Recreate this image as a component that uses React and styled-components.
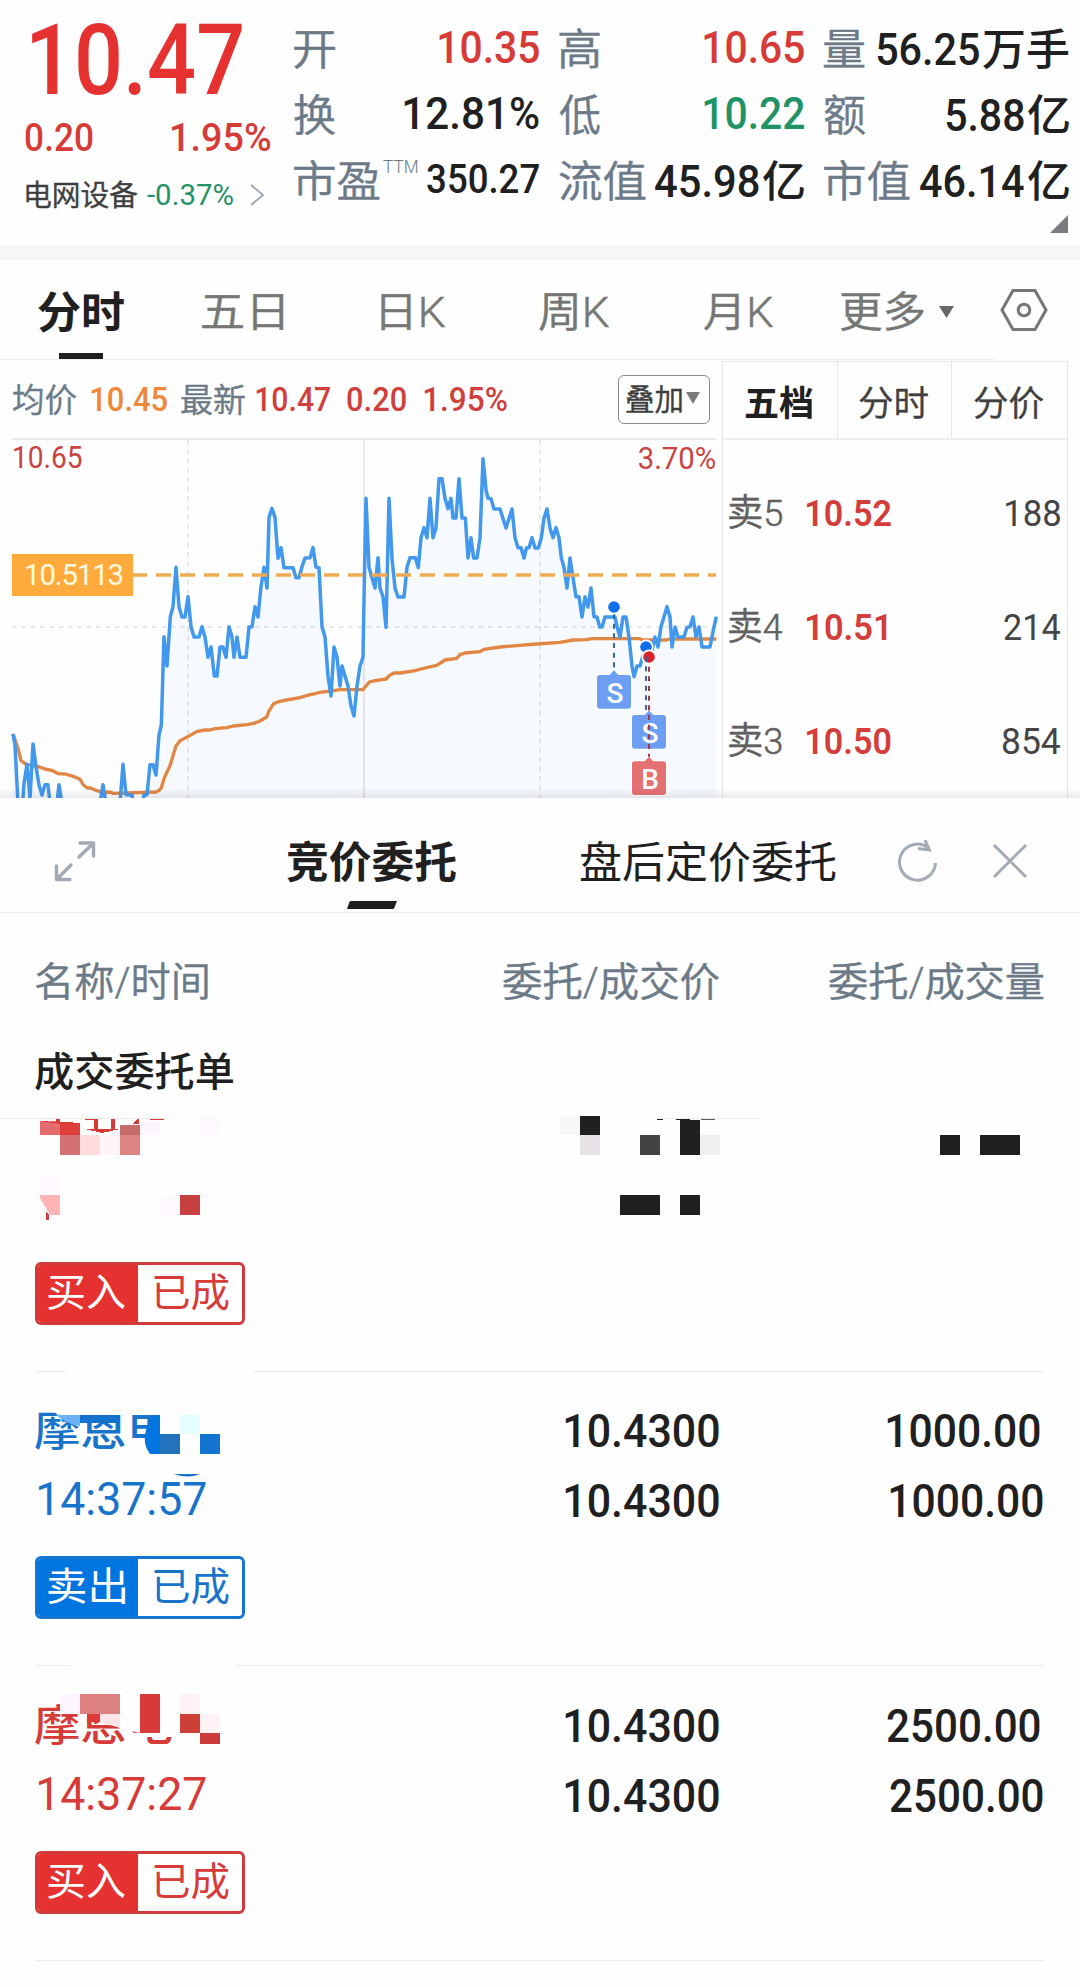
import React, { useLayoutEffect, useRef, useState } from "react";
import styled, { createGlobalStyle } from "styled-components";

const RED = "#e53231";
const RED_TEXT = "#d63b38";
const BLUE = "#0075e0";
const BLUE_TEXT = "#1874cb";
const GREEN = "#1f9366";
const INK = "#202020";
const SLATE = "#6c7a88";
const GREY = "#757775";
const THIN = 350;

const GlobalStyle = createGlobalStyle`
  * { box-sizing: border-box; }
  body {
    margin: 0;
    background: #fefefe;
    font-family: Roboto, "Noto Sans CJK SC", sans-serif;
  }
`;

/* Text condensed or widened so that its ink fills a given width. */
const FitBox = styled.div`
  flex: none;
  width: ${(p) => p.$w}px;
  height: ${(p) => p.$size}px;
  margin-left: ${(p) => p.$ml || 0}px;
`;
const FitText = styled.span`
  display: inline-block;
  white-space: nowrap;
  transform-origin: 0 0;
  vertical-align: top;
  font-size: ${(p) => p.$size}px;
  line-height: ${(p) => p.$size}px;
  font-weight: ${(p) => p.$weight};
  color: ${(p) => p.$color};
  -webkit-text-stroke: ${(p) => (p.$weight === THIN ? 0.5 : 0)}px ${(p) => p.$color};
`;

function Fit({ children, w, size, weight = 400, color = INK, dy = 0, ml }) {
  const ref = useRef(null);
  const [fit, setFit] = useState({ s: 1, x: 0 });
  useLayoutEffect(() => {
    const ctx = document.createElement("canvas").getContext("2d");
    ctx.font = `${weight} ${size}px Roboto, "Noto Sans CJK SC", sans-serif`;
    const m = ctx.measureText(children);
    const ink = m.actualBoundingBoxLeft + m.actualBoundingBoxRight;
    const s = w / ink;
    setFit({ s, x: m.actualBoundingBoxLeft * s });
  }, [children, w, size, weight]);
  return (
    <FitBox $w={w} $size={size} $ml={ml}>
      <FitText
        ref={ref}
        $size={size}
        $weight={weight}
        $color={color}
        style={{ transform: `translate(${fit.x}px, ${dy}px) scaleX(${fit.s})` }}
      >
        {children}
      </FitText>
    </FitBox>
  );
}

const Page = styled.div`
  width: 1080px;
  height: 1987px;
  overflow: hidden;
  background: #fefefe;
`;

/* ---------- quote header ---------- */
const Header = styled.header`
  display: flex;
  position: relative;
  height: 245px;
`;
const PriceBlock = styled.div`
  width: 294px;
  padding-left: 25px;
`;
const PriceLine = styled.div`
  display: flex;
  align-items: center;
  height: ${(p) => p.$h}px;
`;
const Stats = styled.div`
  display: grid;
  grid-template-columns: 245px 245px 245px;
  grid-auto-rows: 66px;
  column-gap: 20px;
  padding-top: 14px;
`;
const Cell = styled.div`
  display: flex;
  align-items: center;
  justify-content: space-between;
`;
const Group = styled.div`
  display: flex;
  align-items: center;
`;
const Band = styled.div`
  height: 15px;
  background: #f6f6f6;
`;
const Corner = styled.svg`
  position: absolute;
  right: 12px;
  bottom: 12px;
`;

const stats = [
  { label: "开", lw: 41, num: "10.35", w: 100, color: RED_TEXT },
  { label: "高", lw: 41, num: "10.65", w: 100, color: RED_TEXT },
  { label: "量", lw: 41, num: "56.25", w: 102, unit: "万手", uw: 86 },
  { label: "换", lw: 41, num: "12.81%", w: 135 },
  { label: "低", lw: 41, num: "10.22", w: 100, color: GREEN },
  { label: "额", lw: 41, num: "5.88", w: 78, unit: "亿", uw: 41 },
  { label: "市盈", lw: 86, sup: "TTM", num: "350.27", w: 112, size: 41 },
  { label: "流值", lw: 87, num: "45.98", w: 104, unit: "亿", uw: 41 },
  { label: "市值", lw: 86, num: "46.14", w: 104, unit: "亿", uw: 41 },
];

function Stat({ s }) {
  return (
    <Cell>
      <Group>
        <Fit w={s.lw} size={43} weight={THIN} color={SLATE} dy={3}>{s.label}</Fit>
        {s.sup && <Fit w={34} size={18} weight={300} color={SLATE} dy={-12} ml={3}>{s.sup}</Fit>}
      </Group>
      <Group>
        <Fit w={s.w} size={s.size || 45} weight={500} color={s.color} dy={s.unit ? 2 : 0}>{s.num}</Fit>
        {s.unit && <Fit w={s.uw} size={43} weight={500} ml={4} dy={3}>{s.unit}</Fit>}
      </Group>
    </Cell>
  );
}

/* ---------- period tabs ---------- */
const Tabs = styled.nav`
  display: flex;
  height: 99px;
  padding-left: 38px;
`;
const Tab = styled.div`
  display: flex;
  flex-direction: column;
  align-items: center;
  justify-content: space-between;
  height: 99px;
  padding-top: 29px;
  margin-right: ${(p) => p.$gap}px;
`;
const TabMark = styled.div`
  width: 44px;
  height: 6px;
  background: ${INK};
`;
const TabIcon = styled.div`
  height: 99px;
  padding-top: ${(p) => p.$top}px;
  margin-right: ${(p) => p.$gap}px;
`;
const TabLine = styled.div`
  width: 996px;
  height: 1px;
  background: #f0f0f0;
`;

/* ---------- chart and order book ---------- */
const Market = styled.section`
  display: flex;
  position: relative;
  height: 438px;
`;
const ChartSide = styled.div`
  width: 722px;
`;
const InfoBar = styled.div`
  display: flex;
  align-items: center;
  height: 70px;
  padding: 8px 0 0 13px;
`;
const Overlay = styled.div`
  display: flex;
  align-items: center;
  gap: 4px;
  width: 92px;
  height: 49px;
  margin-left: 111px;
  padding-left: 7px;
  border: 1.5px solid #8b8b8b;
  border-radius: 6px;
`;
const ChartSvg = styled.svg`
  display: block;
`;
const Book = styled.div`
  width: 346px;
  height: 437px;
  margin-top: 1px;
  border: 1px solid #e6e6e4;
  border-bottom: 0;
`;
const BookTabs = styled.div`
  display: grid;
  grid-template-columns: repeat(3, 1fr);
  height: 78px;
  border-bottom: 2px solid #efefed;
`;
const BookTab = styled.div`
  display: flex;
  align-items: center;
  justify-content: center;
  border-right: ${(p) => (p.$last ? 0 : 1)}px solid #e8e8e6;
  padding: 4px 2px 0 0;
`;
const BookRows = styled.div`
  padding-top: 16px;
`;
const BookRow = styled.div`
  display: flex;
  align-items: center;
  height: 114px;
  padding: 0 7px 0 6px;
`;
const Spacer = styled.div`
  flex: 1;
`;
const Fade = styled.div`
  position: absolute;
  left: 0;
  right: 0;
  bottom: 0;
  height: 10px;
  background: linear-gradient(rgba(60, 50, 80, 0), rgba(60, 50, 80, 0.1));
`;

/* coordinates are thirds of a pixel */
const priceLine =
  "39,912 45,945 54,1120 68,1120 72,1060 81,1003 90,1104 99,942 108,1010 117,1065 126,1095 135,1064 144,1064 150,1120 171,1120 177,1064 186,1120 300,1120 309,1064 318,1120 360,1120 369,1003 378,1094 396,1095 400,1120 428,1120 432,1095 441,1094 450,1004 459,1004 468,1035 477,915 484,885 492,620 501,708 511,560 519,530 528,412 537,530 546,561 555,561 564,500 573,590 582,621 597,621 606,590 615,621 624,682 633,651 643,738 651,738 660,651 669,651 678,682 687,590 696,621 702,682 711,621 720,682 738,682 747,591 756,590 765,530 774,561 783,470 792,412 801,474 807,262 816,235 825,262 834,385 843,353 852,413 879,413 888,443 897,443 906,410 915,384 930,383 939,353 948,412 957,413 966,590 975,621 984,738 993,798 1002,651 1011,682 1020,768 1026,708 1044,768 1053,828 1062,858 1071,768 1080,708 1089,682 1093,450 1098,205 1107,412 1116,443 1125,474 1134,383 1140,474 1149,500 1158,592 1167,205 1176,385 1185,474 1194,501 1212,501 1221,412 1230,383 1246,383 1255,413 1263,323 1272,293 1281,323 1290,205 1299,323 1308,293 1317,146 1326,146 1335,205 1344,236 1353,205 1359,264 1368,264 1377,146 1386,264 1396,264 1404,384 1413,323 1421,384 1431,384 1440,323 1449,86 1458,180 1464,205 1473,206 1482,237 1500,237 1518,294 1536,237 1545,323 1554,353 1563,353 1572,384 1579,354 1587,353 1596,323 1605,354 1615,354 1624,323 1632,264 1641,237 1650,294 1659,323 1668,293 1677,323 1684,384 1692,412 1701,474 1710,384 1719,443 1728,500 1737,500 1746,561 1755,500 1764,531 1773,474 1782,560 1791,561 1799,591 1806,591 1815,561 1845,561 1851,590 1860,621 1869,561 1878,561 1887,621 1896,708 1902,740 1911,708 1920,708 1928,680 1940,655 1956,660 1965,621 1974,651 1983,590 2001,530 2010,561 2016,651 2025,591 2034,621 2052,621 2061,592 2070,590 2079,561 2088,621 2097,591 2106,651 2130,651 2140,600 2149,560";
const averageLine =
  "39,912 54,955 63,992 78,1003 115,1010 135,1017 155,1021 175,1031 195,1032 220,1039 240,1048 250,1065 262,1074 272,1074 290,1082 310,1087 330,1086 340,1090 468,1086 478,1081 484,1073 492,1046 510,1007 528,948 540,932 560,922 590,905 615,900 630,900 645,896 680,893 700,888 740,884 762,880 780,873 800,861 806,845 820,822 835,815 860,810 900,803 925,795 945,791 965,786 985,784 1020,779 1089,779 1098,768 1108,756 1125,752 1158,747 1168,737 1182,729 1200,729 1245,722 1275,714 1310,706 1335,690 1370,685 1380,674 1395,669 1440,665 1452,658 1500,651 1550,647 1610,642 1680,637 1720,630 1760,629 1775,626 1920,626 1928,630 2000,630 2010,627 2149,627";

function Pin({ x, y, color, letter }) {
  return (
    <g>
      <path
        d={`M${x - 43} ${y}h30l13 -14l13 14h30q8 0 8 8v85q0 8 -8 8h-86q-8 0 -8 -8v-85q0 -8 8 -8z`}
        fill={color}
        stroke="#fff"
        strokeWidth="8"
        paintOrder="stroke"
      />
      <text
        x={x + 3}
        y={y + 84}
        textAnchor="middle"
        fontFamily="Roboto, sans-serif"
        fontWeight="500"
        fontSize="84"
        fill="#fff"
      >
        {letter}
      </text>
    </g>
  );
}

function Chart() {
  const stem = { strokeWidth: 6, strokeDasharray: "15 14" };
  return (
    <ChartSvg width="720" height="368" viewBox="0 0 2160 1104">
      <g stroke="#e9e9e5" strokeWidth="6">
        <path d="M36 27H2148M1092 27V1104" />
        <path d="M564 30V1104M1620 30V1104M36 591H2148" strokeDasharray="14 14" />
      </g>
      <polygon points={`36,1120 ${priceLine} 2148,1120`} fill="#3b8bff" fillOpacity="0.045" />
      <polyline points={averageLine} fill="none" stroke="#e28644" strokeWidth="10" strokeLinejoin="round" />
      <polyline points={priceLine} fill="none" stroke="#4298ec" strokeWidth="10.5" strokeLinejoin="round" />
      <path d="M396 435H2148" stroke="#efab53" strokeWidth="10" strokeDasharray="45 27" />
      <rect x="36" y="372" width="363" height="126" fill="#ffaa3c" />
      <g fontFamily="Roboto, sans-serif">
        <text x="72" y="465" fontSize="88" fill="#fffbe0" textLength="300">10.5113</text>
        <text x="36" y="114" fontSize="92" fill="#c94340" textLength="212" lengthAdjust="spacingAndGlyphs">10.65</text>
        <text x="1913" y="118" fontSize="92" fill="#c94340" textLength="236" lengthAdjust="spacingAndGlyphs">3.70%</text>
      </g>
      <path d="M1842 552V725" stroke="#2f68a3" {...stem} />
      <circle cx="1842" cy="531" r="20" fill="#0f6eed" stroke="#fff" strokeWidth="5" />
      <circle cx="1938" cy="651" r="20" fill="#0f6eed" stroke="#fff" strokeWidth="5" />
      <circle cx="1947" cy="681" r="20" fill="#d9222a" stroke="#fff" strokeWidth="5" />
      <path d="M1938 680V850" stroke="#2f68a3" {...stem} />
      <Pin x={1842} y={735} color="#6c9ff4" letter="S" />
      <Pin x={1947} y={855} color="#6c9ff4" letter="S" />
      <Pin x={1947} y={994} color="#e57172" letter="B" />
      <path d="M1947 710V980" stroke="#a93444" {...stem} />
    </ChartSvg>
  );
}

const asks = [
  { name: "卖5", price: "10.52", pw: 84, qty: "188", qw: 54 },
  { name: "卖4", price: "10.51", pw: 80, qty: "214", qw: 56 },
  { name: "卖3", price: "10.50", pw: 84, qty: "854", qw: 57 },
];

/* ---------- orders panel ---------- */
const PanelHead = styled.div`
  display: flex;
  height: 115px;
  padding-left: 52px;
  border-bottom: 1px solid #ebebeb;
`;
const IconSlot = styled.div`
  padding-top: ${(p) => p.$top}px;
  margin-left: ${(p) => p.$ml || 0}px;
  height: 100px;
`;
const PanelTab = styled.div`
  display: flex;
  flex-direction: column;
  align-items: center;
  gap: 18px;
  padding-top: 42px;
  margin-left: ${(p) => p.$ml}px;
`;
const Columns = styled.div`
  display: flex;
  align-items: center;
  height: 136px;
  padding: 0 35px;
`;
const SectionTitle = styled.div`
  display: flex;
  align-items: center;
  height: 44px;
  margin-bottom: 23px;
  padding-left: 35px;
`;
const Order = styled.article`
  position: relative;
  height: 295px;
  padding: 22px 37px 0 35px;
`;
const OrderLine = styled.div`
  display: flex;
  align-items: center;
  height: 70px;
`;
const Tag = styled.div`
  display: flex;
  width: 210px;
  height: 63px;
  margin: ${(p) => p.$mt}px 0 46px ${(p) => p.$ml || 0}px;
  border: 3px solid ${(p) => p.$color};
  border-radius: 6px;
  background: #fff;
  overflow: hidden;
`;
const TagSide = styled.div`
  display: flex;
  align-items: center;
  width: 100px;
  padding-left: 10px;
  background: ${(p) => p.$color};
`;
const TagState = styled.div`
  display: flex;
  align-items: center;
  padding-left: 16px;
`;
const Rule = styled.div`
  display: flex;
  justify-content: space-between;
  width: 1009px;
  height: 1px;
  margin-left: ${(p) => p.$ml || 0}px;
`;
const RulePart = styled.div`
  width: ${(p) => p.$w}px;
  background: #ececec;
`;
const MaskedRow = styled.svg`
  display: block;
`;
const NameMask = styled.svg`
  position: absolute;
  left: 0;
  top: 0;
`;

function StatusTag({ side, color, text, border, mt, ml }) {
  return (
    <Tag $color={border} $mt={mt} $ml={ml}>
      <TagSide $color={color}>
        <Fit w={77} size={39} color="#fff" dy={0}>{side}</Fit>
      </TagSide>
      <TagState>
        <Fit w={75} size={39} color={text} dy={0}>已成</Fit>
      </TagState>
    </Tag>
  );
}

function OrderItem({ name, nw, time, qty, color, fill, border, side, mask, rule }) {
  return (
    <Order>
      <OrderLine>
        <Fit w={nw} size={43} weight={500} color={color} dy={2}>{name}</Fit>
        <Spacer />
        <Fit w={154} size={47} weight={500} dy={1}>10.4300</Fit>
        <Fit w={153} size={47} weight={500} ml={168} dy={1}>{qty}</Fit>
        <FitBox $w={3} $size={10} />
      </OrderLine>
      <OrderLine>
        <Fit w={168} size={47} color={color} ml={3} dy={-1}>{time}</Fit>
        <Spacer />
        <Fit w={154} size={47} weight={500} dy={1}>10.4300</Fit>
        <Fit w={153} size={47} weight={500} ml={171} dy={1}>{qty}</Fit>
      </OrderLine>
      {mask}
      <StatusTag side={side} color={fill} text={color} border={border} mt={22} />
      <Rule>
        {rule.map((w) => <RulePart key={w} $w={w} />)}
      </Rule>
    </Order>
  );
}

const topBlocks = [
  [40, 1121, 20, 14, "#e46c6c"], [60, 1123, 20, 12, "#df3c3c"], [60, 1135, 20, 20, "#d37175"],
  [80, 1135, 20, 20, "#ffdade"], [100, 1135, 20, 20, "#fff5f6"], [120, 1125, 20, 10, "#c56c6c"],
  [120, 1135, 20, 20, "#dd8482"], [140, 1122, 20, 13, "#fbf5ff"], [200, 1116, 20, 19, "#fdf9ff"],
  [40, 1175, 20, 20, "#fefaff"], [40, 1195, 20, 20, "#ffb5b6"], [160, 1195, 20, 20, "#fdf9ff"],
  [180, 1195, 20, 20, "#c6403f"],
  [560, 1116, 20, 19, "#f7f7f7"], [580, 1116, 20, 19, INK], [580, 1135, 20, 20, "#e6e2e6"],
  [640, 1135, 20, 20, "#424242"], [680, 1120, 20, 35, INK], [700, 1135, 20, 20, "#efefef"],
  [940, 1135, 20, 20, INK], [980, 1135, 40, 20, INK], [620, 1195, 40, 20, INK], [680, 1195, 20, 20, INK],
  [657, 1119, 6, 1, INK], [676, 1119, 14, 1, INK], [701, 1119, 14, 1, "#5a5a5a"],
];
const sellBlocks = [
  [80, 1415, 40, 8, "#1272cd"], [160, 1434, 20, 20, "#2372bc"],
  [180, 1415, 20, 19, "#e4feff"], [200, 1434, 20, 20, "#1374ce"],
];
const buyBlocks = [
  [60, 1694, 20, 20, "#fdf5ff"], [80, 1694, 40, 20, "#dd8082"], [87, 1714, 13, 8, "#dd3a38"],
  [140, 1694, 20, 39, "#d83939"], [180, 1694, 20, 20, "#fff2f5"], [180, 1714, 20, 19, "#cc4038"],
  [200, 1714, 20, 19, "#fff2f5"], [200, 1733, 20, 11, "#cc3b3b"],
];
const Blocks = ({ list }) =>
  list.map(([x, y, w, h, c]) => <rect key={`${x}-${y}`} x={x} y={y} width={w} height={h} fill={c} />);

function TopMask() {
  return (
    <MaskedRow width="1080" height="120" viewBox="0 1116 1080 120" shapeRendering="crispEdges">
      <path d="M0 1118.5H168M657 1118.5H762" stroke="#ebebeb" />
      <Blocks list={topBlocks} />
      <path
        fill="#d63b38"
        d="M40 1121l16 1v-3h4v3h13v5l-13-3zM85 1119h13v10h13v-10h4v10h5l-18 4l-17-4h9v-9h-9zM137 1119h2v5h-6zM150 1119h14v1h-14z"
      />
      <path d="M40 1198l10 17h-10z" fill="#fefefe" />
      <path d="M46 1211l3 4v5h-3z" fill="#c94240" />
    </MaskedRow>
  );
}

function SellMask() {
  return (
    <NameMask width="260" height="130" viewBox="0 1372 260 130">
      <path d="M51 1404H230V1415H60L53 1411z" fill="#fefefe" />
      <path d="M53 1411L60 1415V1419H80V1427Q65 1422 53 1411z" fill="#fefefe" />
      <path d="M56 1415H80V1426Q66 1424 56 1415z" fill="#6cb0f5" />
      <Blocks list={sellBlocks} />
      <path d="M131 1438H150V1460H131z" fill="#fefefe" />
      <path d="M160 1402h18v32h-18z" fill="#fefefe" />
      <path d="M160 1415V1454H150Q142 1444 146 1430L152 1417z" fill={BLUE} />
      <path d="M174 1474H200Q188 1479 174 1474z" fill={BLUE_TEXT} />
    </NameMask>
  );
}

function BuyMask() {
  return (
    <NameMask width="260" height="130" viewBox="0 1667 260 130">
      <path d="M60 1694H230V1746H174V1737H128V1730L120 1728L78 1714Q66 1708 60 1700z" fill="#fefefe" />
      <path d="M126 1725H147V1750H126z" fill="#fefefe" />
      <Blocks list={buyBlocks} />
      <path d="M100 1714H120V1727Q108 1725 100 1722z" fill="#fee4e6" />
      <path d="M132 1731l7 2h-5z" fill={RED_TEXT} />
    </NameMask>
  );
}

export default function App() {
  return (
    <Page>
      <GlobalStyle />
      <Header>
        <PriceBlock>
          <PriceLine $h={117}>
            <Fit w={210} size={98} weight={500} color={RED} dy={2} ml={7}>10.47</Fit>
          </PriceLine>
          <PriceLine $h={40}>
            <Fit w={68} size={39} weight={500} color={RED_TEXT} dy={1}>0.20</Fit>
            <Fit w={98} size={39} weight={500} color={RED_TEXT} ml={79} dy={1}>1.95%</Fit>
          </PriceLine>
          <PriceLine $h={75}>
            <Fit w={112} size={29} weight={THIN} color="#3d3d3d" ml={1} dy={2}>电网设备</Fit>
            <Fit w={86} size={30} color={GREEN} ml={9}>-0.37%</Fit>
            <svg width="32" height="24" viewBox="0 0 32 24">
              <path d="M18 2l12 10l-12 10" fill="none" stroke="#a2a8b4" strokeWidth="2" />
            </svg>
          </PriceLine>
        </PriceBlock>
        <Stats>
          {stats.map((s) => <Stat key={s.label} s={s} />)}
        </Stats>
        <Corner width="18" height="18"><path d="M18 0V18H0z" fill="#7b7a7e" /></Corner>
      </Header>
      <Band />
      <Tabs>
        <Tab $gap={78}>
          <Fit w={86} size={43} weight={700} dy={3}>分时</Fit>
          <TabMark />
        </Tab>
        <Tab $gap={98}><Fit w={81} size={42} weight={THIN} color={GREY} dy={3}>五日</Fit></Tab>
        <Tab $gap={94}><Fit w={64} size={42} weight={THIN} color={GREY} dy={3}>日K</Fit></Tab>
        <Tab $gap={95}><Fit w={70} size={42} weight={THIN} color={GREY} dy={3}>周K</Fit></Tab>
        <Tab $gap={68}><Fit w={69} size={42} weight={THIN} color={GREY} dy={3}>月K</Fit></Tab>
        <Tab $gap={15}><Fit w={83} size={42} weight={THIN} color={GREY} dy={3}>更多</Fit></Tab>
        <TabIcon $top={43} $gap={46}>
          <svg width="15" height="12"><path d="M0 0H15L7.500 12z" fill="#676967" /></svg>
        </TabIcon>
        <TabIcon $top={28} $gap={0}>
          <svg width="48" height="44" viewBox="0 0 48 44" fill="none" stroke={GREY} strokeWidth="3">
            <path d="M13 2.500H35L46 22L35 41.500H13L2 22z" />
            <circle cx="24" cy="22" r="5.800" />
          </svg>
        </TabIcon>
      </Tabs>
      <TabLine />
      <Market>
        <ChartSide>
          <InfoBar>
            <Fit w={63} size={33} weight={THIN} color={SLATE} dy={1}>均价</Fit>
            <Fit w={76} size={34} weight={500} color="#f0883a" ml={15}>10.45</Fit>
            <Fit w={64} size={33} weight={THIN} color={SLATE} ml={14} dy={1}>最新</Fit>
            <Fit w={74} size={34} weight={500} color="#cf403d" ml={11}>10.47</Fit>
            <Fit w={59} size={34} weight={500} color="#cf403d" ml={17}>0.20</Fit>
            <Fit w={83} size={34} weight={500} color="#cf403d" ml={18}>1.95%</Fit>
            <Overlay>
              <Fit w={56} size={30} weight={THIN} color="#3d3d3d" dy={1}>叠加</Fit>
              <svg width="14" height="14"><path d="M0 0H14L7 12z" fill="#7b7a7c" /></svg>
            </Overlay>
          </InfoBar>
          <Chart />
        </ChartSide>
        <Book>
          <BookTabs>
            <BookTab><Fit w={68} size={35} weight={700} dy={2}>五档</Fit></BookTab>
            <BookTab><Fit w={69} size={35} weight={THIN} color="#3f3f3f" dy={2}>分时</Fit></BookTab>
            <BookTab $last><Fit w={69} size={35} weight={THIN} color="#3f3f3f" dy={2}>分价</Fit></BookTab>
          </BookTabs>
          <BookRows>
            {asks.map((a) => (
              <BookRow key={a.name}>
                <Fit w={53} size={37} weight={THIN} color="#606060">{a.name}</Fit>
                <Fit w={a.pw} size={37} weight={600} color="#d43d3a" ml={25}>{a.price}</Fit>
                <Spacer />
                <Fit w={a.qw} size={37} color="#444">{a.qty}</Fit>
              </BookRow>
            ))}
          </BookRows>
        </Book>
        <Fade />
      </Market>
      <PanelHead>
        <IconSlot $top={40}>
          <svg width="46" height="46" viewBox="0 0 46 46" fill="none" stroke="#a2a9b2" strokeWidth="3.400" strokeLinecap="round" strokeLinejoin="round">
            <path d="M28 5H41.500V18M41 5.500L27 19M4.500 28V41.500H18M5 41L19 27" />
          </svg>
        </IconSlot>
        <PanelTab $ml={189}>
          <Fit w={169} size={43} weight={700} dy={2}>竞价委托</Fit>
          <svg width="50" height="8"><path d="M4 0H50L47.500 6.500Q47 8 45.500 8H0L2 2Q2.500 0 4 0z" fill={INK} /></svg>
        </PanelTab>
        <PanelTab $ml={124}>
          <Fit w={256} size={43} dy={2}>盘后定价委托</Fit>
        </PanelTab>
        <IconSlot $top={40} $ml={61}>
          <svg width="44" height="46" viewBox="0 0 44 46" fill="none" stroke="#a4abb5" strokeWidth="3">
            <path d="M38.500 25A18 18 0 1 1 31 9.500M28 2L32.500 12L21 10.500" />
          </svg>
        </IconSlot>
        <IconSlot $top={44} $ml={50}>
          <svg width="38" height="38" viewBox="0 0 38 38" stroke="#a4abb5" strokeWidth="3">
            <path d="M3 3L35 35M35 3L3 35" />
          </svg>
        </IconSlot>
      </PanelHead>
      <Columns>
        <Fit w={173} size={40} weight={THIN} color={SLATE} dy={2}>名称/时间</Fit>
        <Fit w={216} size={40} weight={THIN} color={SLATE} ml={295} dy={2}>委托/成交价</Fit>
        <Fit w={215} size={40} weight={THIN} color={SLATE} ml={110} dy={2}>委托/成交量</Fit>
      </Columns>
      <SectionTitle>
        <Fit w={199} size={40} weight={500} dy={2}>成交委托单</Fit>
      </SectionTitle>
      <TopMask />
      <StatusTag side="买入" color={RED} text={RED_TEXT} border="#cf3a3a" mt={26} ml={35} />
      <Rule $ml={35}>
        <RulePart $w={31} />
        <RulePart $w={791} />
      </Rule>
      <OrderItem
        name="摩恩电"
        nw={137}
        time="14:37:57"
        qty="1000.00"
        color={BLUE_TEXT}
        fill={BLUE}
        border="#1475d2"
        side="卖出"
        rule={[36, 809]}
        mask={<SellMask />}
      />
      <OrderItem
        name="摩恩电"
        nw={137}
        time="14:37:27"
        qty="2500.00"
        color={RED_TEXT}
        fill={RED}
        border="#cf3a3a"
        side="买入"
        rule={[1009]}
        mask={<BuyMask />}
      />
    </Page>
  );
}
